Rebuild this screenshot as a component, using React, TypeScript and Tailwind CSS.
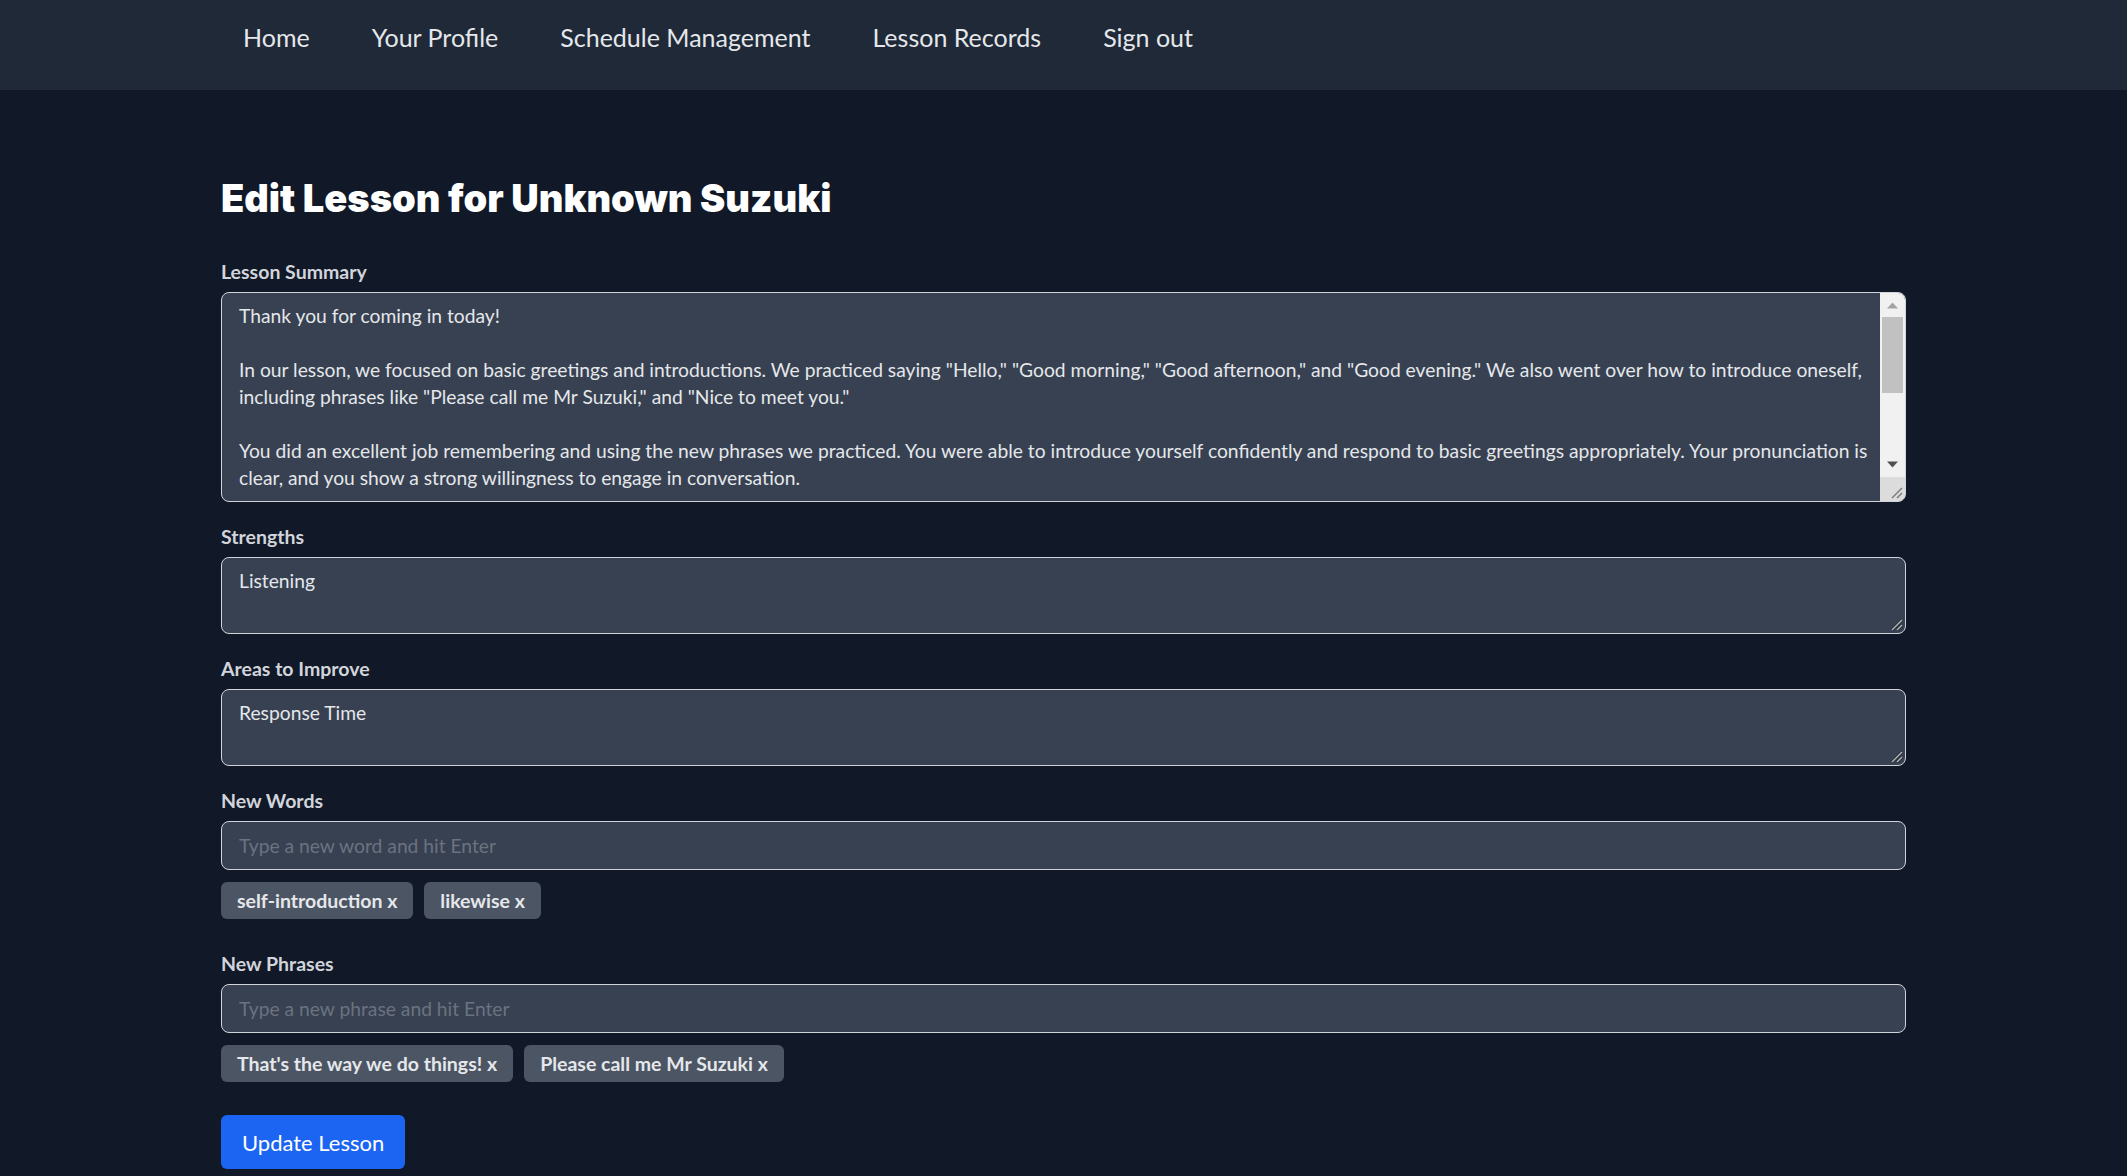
import React from "react";

const summary = `Thank you for coming in today!

In our lesson, we focused on basic greetings and introductions. We practiced saying "Hello," "Good morning," "Good afternoon," and "Good evening." We also went over how to introduce oneself,
including phrases like "Please call me Mr Suzuki," and "Nice to meet you."

You did an excellent job remembering and using the new phrases we practiced. You were able to introduce yourself confidently and respond to basic greetings appropriately. Your pronunciation is
clear, and you show a strong willingness to engage in conversation.

For next time, please try to practice answering greetings a little more quickly. Listening carefully and responding
without hesitation will help your conversations feel more natural.

Keep up the great work, and I look forward to seeing you in our next lesson!`;

function Label({ children, top }: { children: React.ReactNode; top: string }) {
  return (
    <label
      className={`block h-[26px] text-[19.5px] leading-[26px] font-bold text-[#d1d5db] mb-[7px] ${top}`}
    >
      {children}
    </label>
  );
}

function Tag({ text }: { text: string }) {
  return (
    <span className="inline-flex h-[37px] items-center rounded-[6px] bg-[#4b5563] px-[16px] text-[19.5px] font-bold text-[#e5e7eb]">
      {text} x
    </span>
  );
}

function Grip() {
  return (
    <svg
      className="pointer-events-none absolute bottom-[3px] right-[3px]"
      width="13"
      height="13"
      viewBox="0 0 13 13"
    >
      <path d="M2 12 L12 2" stroke="#1f2937" strokeWidth="3" />
      <path d="M2 12 L12 2" stroke="#b5b5b5" strokeWidth="1.5" />
      <path d="M7 12 L12 7" stroke="#1f2937" strokeWidth="3" />
      <path d="M7 12 L12 7" stroke="#b5b5b5" strokeWidth="1.5" />
    </svg>
  );
}

function FakeScrollbar() {
  return (
    <div className="flex w-[25px] flex-col bg-[#f1f1f1]">
      <div className="flex h-[24px] items-center justify-center">
        <svg width="11" height="7" viewBox="0 0 11 7">
          <path d="M0 6.5 L5.5 0.5 L11 6.5 Z" fill="#a3a3a3" />
        </svg>
      </div>
      <div className="flex flex-1 flex-col px-[2px]">
        <div className="h-[76px] bg-[#c1c1c1]" />
      </div>
      <div className="flex h-[26px] items-center justify-center">
        <svg width="11" height="7" viewBox="0 0 11 7">
          <path d="M0 0.5 L5.5 6.5 L11 0.5 Z" fill="#505050" />
        </svg>
      </div>
      <div className="flex h-[24px] items-end justify-end bg-[#dcdcdc] pb-[2px] pr-[2px]">
        <svg width="14" height="14" viewBox="0 0 14 14">
          <path d="M3 13 L13 3" stroke="#7a7a7a" strokeWidth="1.5" />
          <path d="M8 13 L13 8" stroke="#7a7a7a" strokeWidth="1.5" />
        </svg>
      </div>
    </div>
  );
}

function SmallArea({ value }: { value: string }) {
  return (
    <div className="relative">
      <textarea
        defaultValue={value}
        className="block h-[77px] w-full resize-none rounded-[8px] border border-[#d1d5db] bg-[#374151] pl-[17px] pt-[9px] text-[19.25px] leading-[27px] text-[#e5e7eb] outline-none"
      />
      <Grip />
    </div>
  );
}

export default function App() {
  return (
    <div className="min-h-screen bg-[#111827] font-['Lato',sans-serif] text-[#e5e7eb]">
      <nav className="h-[90px] bg-[#1f2937]">
        <div className="mx-auto flex h-full w-[1685px] items-start gap-[62px] pl-[22px] pt-[22px] text-[25px] leading-[30px] text-[#e5e7eb]">
          <a href="#">Home</a>
          <a href="#">Your Profile</a>
          <a href="#">Schedule Management</a>
          <a href="#">Lesson Records</a>
          <a href="#">Sign out</a>
        </div>
      </nav>

      <main className="mx-auto w-[1685px] pb-[40px]">
        <h1 className="mt-[85px] font-['Inter',sans-serif] text-[38px] leading-[46px] font-black text-white">
          Edit Lesson for Unknown Suzuki
        </h1>

        <form className="flex flex-col" onSubmit={(e) => e.preventDefault()}>
          <Label top="mt-[38px]">Lesson Summary</Label>
          <div className="flex h-[210px] overflow-hidden rounded-[8px] border border-[#d1d5db] bg-[#374151]">
            <textarea
              wrap="off"
              readOnly
              value={summary}
              className="flex-1 resize-none overflow-hidden bg-transparent pl-[17px] pr-[10px] pt-[9px] text-[19.25px] leading-[27px] text-[#e5e7eb] outline-none"
            />
            <FakeScrollbar />
          </div>

          <Label top="mt-[22px]">Strengths</Label>
          <SmallArea value="Listening" />

          <Label top="mt-[22px]">Areas to Improve</Label>
          <SmallArea value="Response Time" />

          <Label top="mt-[22px]">New Words</Label>
          <input
            type="text"
            placeholder="Type a new word and hit Enter"
            className="h-[49px] rounded-[8px] border border-[#d1d5db] bg-[#374151] px-[17px] text-[19.25px] text-[#e5e7eb] outline-none placeholder:text-[#6b7280]"
          />
          <div className="mt-[12px] flex gap-[11px]">
            <Tag text="self-introduction" />
            <Tag text="likewise" />
          </div>

          <Label top="mt-[32px]">New Phrases</Label>
          <input
            type="text"
            placeholder="Type a new phrase and hit Enter"
            className="h-[49px] rounded-[8px] border border-[#d1d5db] bg-[#374151] px-[17px] text-[19.25px] text-[#e5e7eb] outline-none placeholder:text-[#6b7280]"
          />
          <div className="mt-[12px] flex gap-[11px]">
            <Tag text="That's the way we do things!" />
            <Tag text="Please call me Mr Suzuki" />
          </div>

          <div className="mt-[33px]">
            <button
              type="submit"
              className="h-[54px] rounded-[6px] bg-[#1c64f2] px-[21px] text-[22px] text-white"
            >
              Update Lesson
            </button>
          </div>
        </form>
      </main>
    </div>
  );
}
